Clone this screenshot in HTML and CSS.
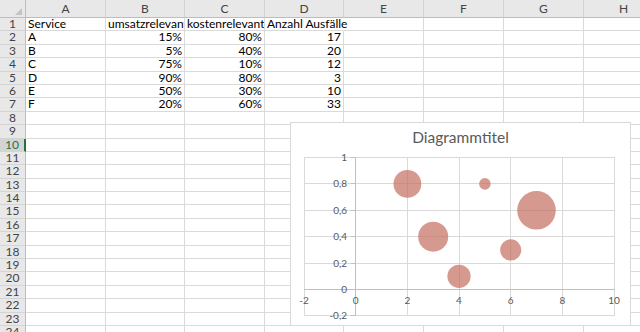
FILE: index.html
```html
<!DOCTYPE html>
<html lang="de">
<head>
<meta charset="utf-8">
<title>Tabelle</title>
<link rel="stylesheet" href="styles.css">
</head>
<body>
<div class="sheet">
  <div class="corner"><svg width="7" height="7" viewBox="0 0 7 7"><polygon points="7,0 7,7 0,7" fill="#c4c4c4"/></svg></div>
  <div class="ch">A</div><div class="ch">B</div><div class="ch">C</div><div class="ch">D</div><div class="ch">E</div><div class="ch">F</div><div class="ch">G</div><div class="ch">H</div>

  <div class="rn">1</div><div class="c">Service</div><div class="c">umsatzrelevant</div><div class="c">kostenrelevant</div><div class="c over">Anzahl Ausfälle</div><div class="c"></div><div class="c"></div><div class="c"></div><div class="c"></div>
  <div class="rn">2</div><div class="c">A</div><div class="c n">15%</div><div class="c n">80%</div><div class="c n">17</div><div class="c"></div><div class="c"></div><div class="c"></div><div class="c"></div>
  <div class="rn">3</div><div class="c">B</div><div class="c n">5%</div><div class="c n">40%</div><div class="c n">20</div><div class="c"></div><div class="c"></div><div class="c"></div><div class="c"></div>
  <div class="rn">4</div><div class="c">C</div><div class="c n">75%</div><div class="c n">10%</div><div class="c n">12</div><div class="c"></div><div class="c"></div><div class="c"></div><div class="c"></div>
  <div class="rn">5</div><div class="c">D</div><div class="c n">90%</div><div class="c n">80%</div><div class="c n">3</div><div class="c"></div><div class="c"></div><div class="c"></div><div class="c"></div>
  <div class="rn">6</div><div class="c">E</div><div class="c n">50%</div><div class="c n">30%</div><div class="c n">10</div><div class="c"></div><div class="c"></div><div class="c"></div><div class="c"></div>
  <div class="rn">7</div><div class="c">F</div><div class="c n">20%</div><div class="c n">60%</div><div class="c n">33</div><div class="c"></div><div class="c"></div><div class="c"></div><div class="c"></div>
  <div class="rn">8</div><div class="c"></div><div class="c"></div><div class="c"></div><div class="c"></div><div class="c"></div><div class="c"></div><div class="c"></div><div class="c"></div>
  <div class="rn">9</div><div class="c"></div><div class="c"></div><div class="c"></div><div class="c"></div><div class="c"></div><div class="c"></div><div class="c"></div><div class="c"></div>
  <div class="rn sel">10</div><div class="c"></div><div class="c"></div><div class="c"></div><div class="c"></div><div class="c"></div><div class="c"></div><div class="c"></div><div class="c"></div>
  <div class="rn">11</div><div class="c"></div><div class="c"></div><div class="c"></div><div class="c"></div><div class="c"></div><div class="c"></div><div class="c"></div><div class="c"></div>
  <div class="rn">12</div><div class="c"></div><div class="c"></div><div class="c"></div><div class="c"></div><div class="c"></div><div class="c"></div><div class="c"></div><div class="c"></div>
  <div class="rn">13</div><div class="c"></div><div class="c"></div><div class="c"></div><div class="c"></div><div class="c"></div><div class="c"></div><div class="c"></div><div class="c"></div>
  <div class="rn">14</div><div class="c"></div><div class="c"></div><div class="c"></div><div class="c"></div><div class="c"></div><div class="c"></div><div class="c"></div><div class="c"></div>
  <div class="rn">15</div><div class="c"></div><div class="c"></div><div class="c"></div><div class="c"></div><div class="c"></div><div class="c"></div><div class="c"></div><div class="c"></div>
  <div class="rn">16</div><div class="c"></div><div class="c"></div><div class="c"></div><div class="c"></div><div class="c"></div><div class="c"></div><div class="c"></div><div class="c"></div>
  <div class="rn">17</div><div class="c"></div><div class="c"></div><div class="c"></div><div class="c"></div><div class="c"></div><div class="c"></div><div class="c"></div><div class="c"></div>
  <div class="rn">18</div><div class="c"></div><div class="c"></div><div class="c"></div><div class="c"></div><div class="c"></div><div class="c"></div><div class="c"></div><div class="c"></div>
  <div class="rn">19</div><div class="c"></div><div class="c"></div><div class="c"></div><div class="c"></div><div class="c"></div><div class="c"></div><div class="c"></div><div class="c"></div>
  <div class="rn">20</div><div class="c"></div><div class="c"></div><div class="c"></div><div class="c"></div><div class="c"></div><div class="c"></div><div class="c"></div><div class="c"></div>
  <div class="rn">21</div><div class="c"></div><div class="c"></div><div class="c"></div><div class="c"></div><div class="c"></div><div class="c"></div><div class="c"></div><div class="c"></div>
  <div class="rn">22</div><div class="c"></div><div class="c"></div><div class="c"></div><div class="c"></div><div class="c"></div><div class="c"></div><div class="c"></div><div class="c"></div>
  <div class="rn">23</div><div class="c"></div><div class="c"></div><div class="c"></div><div class="c"></div><div class="c"></div><div class="c"></div><div class="c"></div><div class="c"></div>
  <div class="rn">24</div><div class="c"></div><div class="c"></div><div class="c"></div><div class="c"></div><div class="c"></div><div class="c"></div><div class="c"></div><div class="c"></div>
</div>

<div class="chart">
  <div class="title">Diagrammtitel</div>
  <svg class="plot" width="339" height="178" viewBox="0 0 339 178">
    <g stroke="#d9d9d9" stroke-width="1" fill="none">
      <line x1="13" y1="10.5" x2="324" y2="10.5"/>
      <line x1="13" y1="36.5" x2="324" y2="36.5"/>
      <line x1="13" y1="63.5" x2="324" y2="63.5"/>
      <line x1="13" y1="89.5" x2="324" y2="89.5"/>
      <line x1="13" y1="116.5" x2="324" y2="116.5"/>
      <line x1="13" y1="168.5" x2="324" y2="168.5"/>
      <line x1="13.5" y1="10" x2="13.5" y2="169"/>
      <line x1="116.5" y1="10" x2="116.5" y2="169"/>
      <line x1="168.5" y1="10" x2="168.5" y2="169"/>
      <line x1="219.5" y1="10" x2="219.5" y2="169"/>
      <line x1="271.5" y1="10" x2="271.5" y2="169"/>
      <line x1="323.5" y1="10" x2="323.5" y2="169"/>
    </g>
    <g stroke="#bfbfbf" stroke-width="1" fill="none">
      <line x1="64.5" y1="10" x2="64.5" y2="169"/>
      <line x1="13" y1="142.5" x2="324" y2="142.5"/>
      <line x1="60" y1="10.5" x2="64" y2="10.5"/>
      <line x1="60" y1="36.5" x2="64" y2="36.5"/>
      <line x1="60" y1="63.5" x2="64" y2="63.5"/>
      <line x1="60" y1="89.5" x2="64" y2="89.5"/>
      <line x1="60" y1="116.5" x2="64" y2="116.5"/>
      <line x1="60" y1="142.5" x2="64" y2="142.5"/>
      <line x1="60" y1="168.5" x2="64" y2="168.5"/>
    </g>
    <g class="lbl" text-anchor="end">
      <text x="56" y="14">1</text>
      <text x="56" y="40">0,8</text>
      <text x="56" y="67">0,6</text>
      <text x="56" y="93">0,4</text>
      <text x="56" y="120">0,2</text>
      <text x="56" y="146">0</text>
      <text x="56" y="172">-0,2</text>
    </g>
    <g class="lbl" text-anchor="middle">
      <text x="13" y="157">-2</text>
      <text x="64.7" y="157">0</text>
      <text x="116.4" y="157">2</text>
      <text x="168" y="157">4</text>
      <text x="219.7" y="157">6</text>
      <text x="271.3" y="157">8</text>
      <text x="323" y="157">10</text>
    </g>
    <g class="bubbles">
      <circle cx="116.4" cy="36.9" r="13.9"/>
      <circle cx="142.2" cy="89.7" r="15"/>
      <circle cx="168" cy="129.3" r="11.6"/>
      <circle cx="193.9" cy="36.9" r="5.8"/>
      <circle cx="219.7" cy="102.9" r="10.6"/>
      <circle cx="245.5" cy="63.3" r="19.3"/>
    </g>
  </svg>
</div>
</body>
</html>
```

FILE: styles.css
```css
html, body {
  margin: 0;
  padding: 0;
  overflow: hidden;
  background: #ffffff;
}

body {
  font-family: Lato, "Liberation Sans", sans-serif;
  color: #000000;
}

.sheet {
  display: grid;
  grid-template-columns: 26px 80px 79px 80px 79px 80px 80px 80px 80px;
  grid-template-rows: 18px repeat(24, 13.4px);
  width: 664px;
}

.sheet > div {
  box-sizing: border-box;
  border-right: 1px solid #dadada;
  border-bottom: 1px solid #dadada;
  font-size: 12px;
  line-height: 12.4px;
  white-space: nowrap;
  overflow-x: clip;
  overflow-y: visible;
  padding: 0 2px 0 2px;
}

.sheet > .corner {
  background: #e8e8e8;
  border-right-color: #bdbdbd;
  border-bottom-color: #bdbdbd;
  display: flex;
  justify-content: flex-end;
  align-items: flex-end;
  padding: 0 3px 2px 0;
}

.corner svg {
  display: block;
}

.sheet > .ch {
  background: #e8e8e8;
  border-right-color: #d2d2d2;
  border-bottom-color: #bdbdbd;
  color: #444444;
  text-align: center;
  font-size: 12px;
  line-height: 14px;
  padding-top: 2px;
}

.sheet > .rn {
  background: #e8e8e8;
  border-right-color: #bdbdbd;
  border-bottom-color: #d4d4d4;
  color: #444444;
  text-align: center;
  padding: 0;
}

.sheet > .rn.sel {
  background: #d4d4d4;
  color: #217346;
  border-right: 2px solid #217346;
}

.sheet > .n {
  text-align: right;
}

.sheet > .over {
  overflow: visible;
  border-right-color: transparent;
  position: relative;
  z-index: 1;
}

.chart {
  position: absolute;
  left: 290px;
  top: 122px;
  width: 341px;
  height: 204px;
  box-sizing: border-box;
  border: 1px solid #d9d9d9;
  background: #ffffff;
  z-index: 5;
}

.title {
  height: 24px;
  box-sizing: border-box;
  padding-top: 4px;
  font-size: 15.5px;
  line-height: 20px;
  text-align: center;
  color: #595959;
}

.plot {
  display: block;
}

.lbl text {
  font-family: Lato, "Liberation Sans", sans-serif;
  font-size: 10px;
  fill: #595959;
}

.bubbles circle {
  fill: rgb(196, 110, 95);
  fill-opacity: 0.7;
}
```
